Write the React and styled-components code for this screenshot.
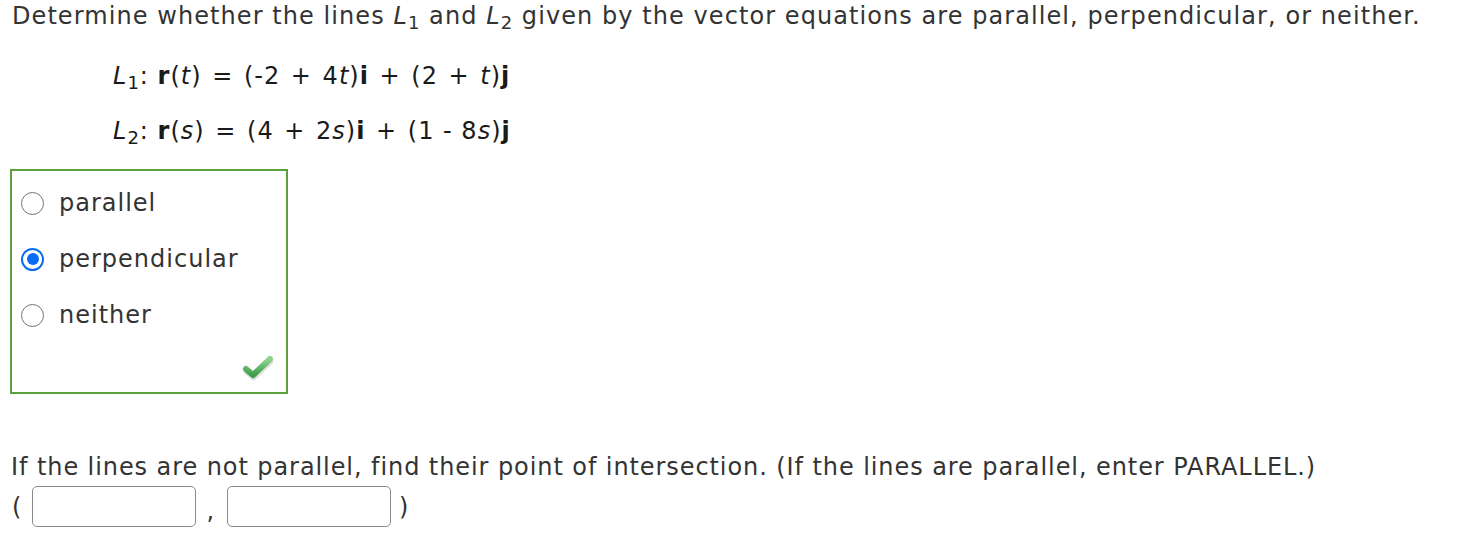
import React from "react";
import styled, { createGlobalStyle } from "styled-components";

const Global = createGlobalStyle`
  html, body { margin: 0; padding: 0; background: #fff; }
  body { font-family: Verdana, "DejaVu Sans", sans-serif; color: #333; }
`;

const Page = styled.div`
  padding: 0 10px;
  font-size: 24px;
  line-height: 32px;
  letter-spacing: 1px;
`;

const Question = styled.p`
  margin: 0;
  padding-left: 2px;
  letter-spacing: 1.07px;
`;

const Equations = styled.div`
  display: flex;
  flex-direction: column;
  gap: 23px;
  padding-left: 103px;
  margin-top: 28px;
  color: #1a1a1a;
`;

const Eq = styled.div`
  white-space: pre;
`;

const Var = styled.i``;
const Sub = styled.sub`
  font-size: 0.75em;
  vertical-align: -0.3em;
  line-height: 0;
`;

const Op = styled.span`
  padding: 0 2px;
`;

const Choices = styled.div`
  margin-top: 22px;
  width: 278px;
  height: 225px;
  box-sizing: border-box;
  border: 2px solid #5d9f3d;
  position: relative;
  padding-top: 16px;
`;

const Option = styled.label`
  display: flex;
  align-items: center;
  height: 32px;
  margin-bottom: 24px;
  padding-left: 9px;
  gap: 15px;
`;

const Radio = styled.span`
  width: 23px;
  height: 23px;
  flex: none;
  border-radius: 50%;
  box-sizing: border-box;
  border: ${(p) => (p.$checked ? "2.5px solid #0a6cf5" : "1.5px solid #737373")};
  display: flex;
  align-items: center;
  justify-content: center;
  &::after {
    content: "";
    display: ${(p) => (p.$checked ? "block" : "none")};
    width: 12px;
    height: 12px;
    border-radius: 50%;
    background: #0a6cf5;
  }
`;

const Check = styled.svg`
  position: absolute;
  right: 11px;
  bottom: 10px;
`;

const Prompt = styled.p`
  margin: 57px 0 0 0;
  padding-left: 1px;
  letter-spacing: 0.92px;
`;

const AnswerRow = styled.div`
  display: flex;
  align-items: center;
  margin-top: 3px;
  padding-left: 2px;
`;

const Paren = styled.span``;

const Field = styled.input`
  width: 164px;
  height: 41px;
  box-sizing: border-box;
  border: 1.5px solid #8a8a8a;
  border-radius: 5px;
  margin: 0 ${(p) => p.$mr || 0}px 0 ${(p) => p.$ml || 0}px;
  font: inherit;
`;

const Comma = styled.span`
  margin-top: 8px;
`;

export default function App() {
  return (
    <Page>
      <Global />
      <Question>
        Determine whether the lines <Var>L</Var><Sub>1</Sub> and <Var>L</Var><Sub>2</Sub> given by the vector equations are parallel, perpendicular, or neither.
      </Question>
      <Equations>
        <Eq>
          <Var>L</Var><Sub>1</Sub>: <b>r</b>(<Var>t</Var>) <Op>=</Op> (-2 <Op>+</Op> 4<Var>t</Var>)<b>i</b> <Op>+</Op> (2 <Op>+</Op> <Var>t</Var>)<b>j</b>
        </Eq>
        <Eq>
          <Var>L</Var><Sub>2</Sub>: <b>r</b>(<Var>s</Var>) <Op>=</Op> (4 <Op>+</Op> 2<Var>s</Var>)<b>i</b> <Op>+</Op> (1 - 8<Var>s</Var>)<b>j</b>
        </Eq>
      </Equations>
      <Choices>
        <Option><Radio />parallel</Option>
        <Option><Radio $checked />perpendicular</Option>
        <Option><Radio />neither</Option>
        <Check width="34" height="28" viewBox="0 0 34 28">
          <defs>
            <linearGradient id="ck" x1="0" y1="0" x2="0" y2="1">
              <stop offset="0" stopColor="#8fd48f" />
              <stop offset="1" stopColor="#3f9e4a" />
            </linearGradient>
          </defs>
          <path d="M5 16 L12 22 L29 6" fill="none" stroke="rgba(0,0,0,0.12)" strokeWidth="6" strokeLinecap="round" strokeLinejoin="round" transform="translate(0.5,1.5)" />
          <path d="M5 15 L12 21 L29 5" fill="none" stroke="url(#ck)" strokeWidth="6" strokeLinecap="round" strokeLinejoin="round" />
        </Check>
      </Choices>
      <Prompt>
        If the lines are not parallel, find their point of intersection. (If the lines are parallel, enter PARALLEL.)
      </Prompt>
      <AnswerRow>
        <Paren>(</Paren>
        <Field $ml={10} $mr={10} />
        <Comma>,</Comma>
        <Field $ml={12} $mr={8} />
        <Paren>)</Paren>
      </AnswerRow>
    </Page>
  );
}
